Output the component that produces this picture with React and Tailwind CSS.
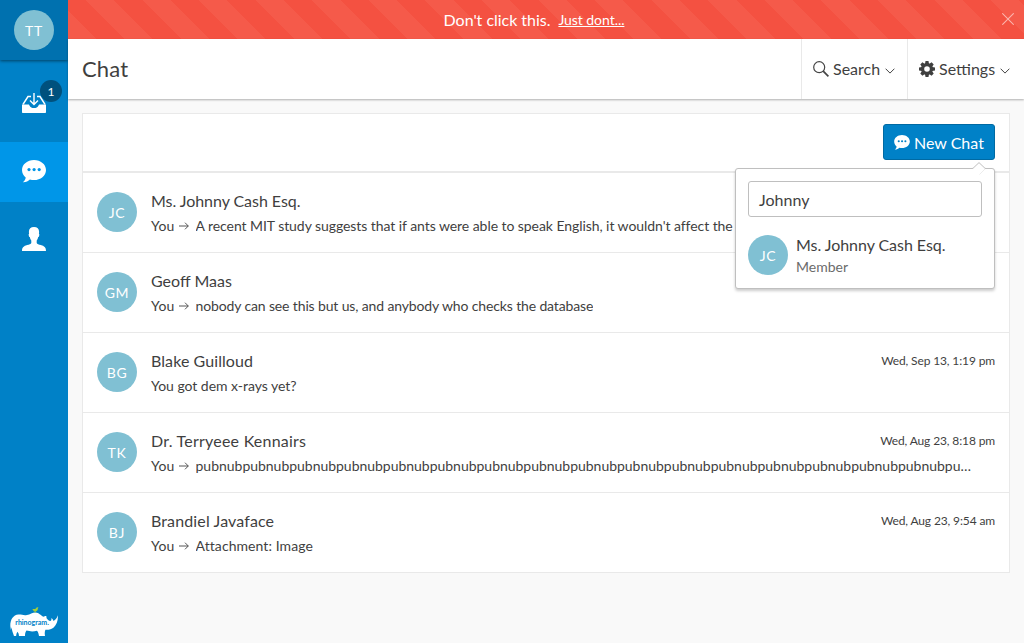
import React from 'react';

const chats = [
  { initials: 'JC', name: 'Ms. Johnny Cash Esq.', nameClass: 'tracking-[-0.05px]', you: true, text: "A recent MIT study suggests that if ants were able to speak English, it wouldn't affect the price of sugar at all", textClass: 'tracking-[-0.062px]', date: '' },
  { initials: 'GM', name: 'Geoff Maas', nameClass: '', you: true, text: 'nobody can see this but us, and anybody who checks the database', textClass: 'tracking-[-0.135px]', date: '' },
  { initials: 'BG', name: 'Blake Guilloud', nameClass: 'tracking-[0.08px]', you: false, text: 'You got dem x-rays yet?', textClass: 'tracking-[-0.03px]', date: 'Wed, Sep 13, 1:19 pm' },
  { initials: 'TK', name: 'Dr. Terryeee Kennairs', nameClass: 'tracking-[0.23px]', you: true, text: 'pubnub'.repeat(24), textClass: 'tracking-[-0.02px]', date: 'Wed, Aug 23, 8:18 pm' },
  { initials: 'BJ', name: 'Brandiel Javaface', nameClass: 'tracking-[0.13px]', you: true, text: 'Attachment: Image', textClass: 'tracking-[0.07px]', date: 'Wed, Aug 23, 9:54 am' },
];

function Avatar({ children }) {
  return (
    <div className="flex h-10 w-10 shrink-0 items-center justify-center rounded-full bg-[#80c0d3] pt-px text-[14px] leading-5 tracking-[0.7px] text-white">
      {children}
    </div>
  );
}

function Bubble({ className, dot }) {
  return (
    <svg viewBox="0 0 24 23" className={className}>
      <path fill="#fff" d="M12 0C5.400 0 0 4.400 0 10c0 3.200 1.500 5.800 3.700 7.600C3.600 19.500 2.600 21 .8 22.300c3.200.1 5.500-1.200 7.100-2.800 1.300.4 2.700.6 4.100.6 6.600 0 12-4.500 12-10.100S18.600 0 12 0z" />
      <g fill={dot}>
        <circle cx="7" cy="9.600" r="1.600" />
        <circle cx="12.100" cy="9.600" r="1.600" />
        <circle cx="17.200" cy="9.600" r="1.600" />
      </g>
    </svg>
  );
}

function Inbox() {
  return (
    <svg viewBox="0 0 24 20" className="h-5 w-6">
      <path d="M9 3.500H6L1 11.300M15 3.500h3L23 11.300" fill="none" stroke="#fff" strokeWidth="1.500" />
      <path d="M0 11.500h6.200c.8 0 1.100.5 1.400 1.200.7 1.500 2.300 2.300 4.400 2.300s3.700-.8 4.400-2.300c.3-.7.6-1.200 1.400-1.200H24V19c0 .6-.4 1-1 1H1c-.6 0-1-.4-1-1z" fill="#fff" />
      <path d="M12 0v11.500M8 7.600l4 4 4-4" fill="none" stroke="#fff" strokeWidth="1.400" />
    </svg>
  );
}

function Person() {
  return (
    <svg viewBox="0 0 24 24" className="h-6 w-6">
      <path fill="#fff" d="M12 0C8.700 0 6.900 1.600 6.900 4.700c0 .8.100 1.500.2 2.100-.5.200-.5.700-.3 1.600.2 1 .5 1.500 1 1.700.3 1.600.8 2.700 1.500 3.500v2.300c-.5 1-2 1.500-4.200 2.200C1.800 19.200 0 20.300 0 24h24c0-3.700-1.800-4.800-5.100-5.900-2.200-.7-3.700-1.200-4.200-2.200v-2.300c.7-.8 1.200-1.900 1.500-3.500.5-.2.800-.7 1-1.700.2-.9.200-1.400-.3-1.600.1-.6.200-1.300.2-2.100C17.100 1.600 15.300 0 12 0z" />
    </svg>
  );
}

function Rhino() {
  return (
    <svg viewBox="0 0 48 32" className="h-8 w-12">
      <path fill="#fff" d="M.3 21C.2 15 3 10 8.500 9.600c3-.2 5 1 8.500.4C20 9.500 22.500 7.500 25.500 7.500c3.500 0 5 3 8 4.200 1.200-.7 2-.9 2.600-.6.500.4.500 1.200.3 2 1.500 1.700 2.600 3 3.800 3 1 0 1.300-1 1.300-3 1.100.8 1.700 1.900 2 3C45.500 15 47 13.200 47.900 10.300c.3 4.500-1.200 9.500-4.200 12.200-2.300 2.100-5.200 2.500-8.300 2.300-.8 1.700-.8 4.100-.4 6.200h-6c-.3-2.100-.9-3.900-2-5.200-3.500.9-7 .8-10.500-.2-1.200 1.400-1.500 3.400-1.500 5.400H9c-.1-1.900-.6-3-1.600-4.200-.8 1.200-1.200 2.600-1.300 4.200H4c-1-3.200-2.200-5.500-2.400-8.800L.9 25z" />
      <path fill="#a6ce39" d="M22.500 4c2 .3 3.100-.1 3.700-1.100.5-.8 1.200-.9 1.700-.4l.8.300-.8.400c0 1.700-.9 2.900-2.300 3.300l-.1 1.200h-.7l-.1-1.200C23.600 6.200 22.900 5.300 22.500 4z" />
      <text x="5.300" y="20" fill="#0081c7" fontSize="8" fontWeight="700" textLength="33.500" lengthAdjust="spacingAndGlyphs">rhinogram.</text>
    </svg>
  );
}

function Chevron() {
  return (
    <svg viewBox="0 0 10 6" className="mt-1 ml-[5px] h-1.5 w-2.5">
      <path d="M.6.7 5 5.100 9.400.7" fill="none" stroke="#444" strokeWidth="1" />
    </svg>
  );
}

function Gear() {
  return (
    <svg viewBox="0 0 16 16" className="h-4 w-4">
      <g fill="#3f3f3f">
        <path d="M6.500 0h3l.5 3H6z M6.500 16h3l.5-3H6z M0 6.500v3l3 .5V6z M16 6.500v3l-3 .5V6z" />
        <path transform="rotate(45 8 8)" d="M6.500 0h3l.5 3H6z M6.500 16h3l.5-3H6z M0 6.500v3l3 .5V6z M16 6.500v3l-3 .5V6z" />
        <path fillRule="evenodd" d="M8 2a6 6 0 1 0 0 12A6 6 0 0 0 8 2zm0 3.200a2.800 2.800 0 1 1 0 5.600 2.800 2.800 0 0 1 0-5.600z" />
      </g>
    </svg>
  );
}

function ChatRow({ chat }) {
  return (
    <div className="flex h-20 border-b border-[#e9e9e9] pr-3.5 pl-3.5">
      <div className="pt-[19px]"><Avatar>{chat.initials}</Avatar></div>
      <div className="ml-3.5 min-w-0 flex-1 pt-4">
        <div className="flex justify-between">
          <div className={`text-[16px] leading-6 ${chat.nameClass}`}>{chat.name}</div>
          <div className="pt-px text-[12px] leading-[22px] tracking-[-0.13px]">{chat.date}</div>
        </div>
        <div className="mt-0.5 flex w-[822px] items-center text-[14px] leading-[22px]">
          {chat.you && (
            <>
              <span className="tracking-[0.2px]">You</span>
              <svg viewBox="0 0 10 8" className="mr-[7px] ml-1 h-2 w-2.5 shrink-0">
                <path d="M0 4h9.300M6 .7 9.300 4 6 7.300" fill="none" stroke="#444" strokeWidth=".9" />
              </svg>
            </>
          )}
          <span className={`truncate ${chat.textClass}`}>{chat.text}</span>
        </div>
      </div>
    </div>
  );
}

export default function App() {
  return (
    <div className="flex h-[643px] w-[1024px] overflow-hidden bg-[#f9f9f9] font-['Lato',sans-serif] text-[16px] text-[#3f3f3f]">
      <aside className="flex w-[68px] shrink-0 flex-col bg-[#0081c7]">
        <div className="flex h-[60px] items-center justify-center bg-[#0071af] shadow-[0_1px_3px_rgba(0,0,0,0.5)]">
          <Avatar>TT</Avatar>
        </div>
        <div className="relative flex h-[82px] justify-center pt-[33px]">
          <Inbox />
          <span className="absolute top-5 left-10 flex h-[22px] w-[22px] items-center justify-center rounded-full bg-[#00517d] pt-px text-[12px] text-white">1</span>
        </div>
        <div className="flex h-[60px] justify-center bg-[#0096e8] pt-[18px]">
          <Bubble className="h-[23px] w-6" dot="#0096e8" />
        </div>
        <div className="flex h-[60px] justify-center pt-[25px]"><Person /></div>
        <div className="mt-auto flex h-[38px] justify-center"><Rhino /></div>
      </aside>

      <main className="flex min-w-0 flex-1 flex-col">
        <div className="relative flex h-[39px] shrink-0 items-center justify-center bg-[repeating-linear-gradient(45deg,#f55a4a_0,#f55a4a_20px,#f45141_20px,#f45141_40px)] pr-6 text-white">
          <span className="tracking-[-0.03px]">Don't click this.</span>
          <a className="ml-2 text-[14px] tracking-[-0.05px] underline">Just dont...</a>
          <svg viewBox="0 0 12 12" className="absolute top-[13px] right-2.5 h-3 w-3">
            <path d="M.3.300 11.700 11.700M11.700.3.300 11.700" stroke="#fbb5ae" strokeWidth="1.100" />
          </svg>
        </div>
        <header className="z-10 flex h-[60px] shrink-0 items-center bg-white shadow-[0_1px_2px_rgba(0,0,0,0.3)]">
          <h1 className="ml-3.5 flex-1 text-[22px] leading-8 tracking-[0.15px]">Chat</h1>
          <div className="flex h-full w-[106px] items-center border-l border-[#e9e9e9] pl-[11px]">
            <svg viewBox="0 0 16 16" className="mr-1 h-4 w-4">
              <circle cx="6.200" cy="6.200" r="5.500" fill="none" stroke="#444" strokeWidth="1.200" />
              <path d="m10.200 10.200 5.200 5.200" stroke="#444" strokeWidth="1.700" />
            </svg>
            Search<Chevron />
          </div>
          <div className="flex h-full w-[117px] items-center border-l border-[#e9e9e9] pl-[11px]">
            <span className="mr-1"><Gear /></span>
            Settings<Chevron />
          </div>
        </header>

        <section className="mx-3.5 mt-3.5 border-x border-t border-[#e9e9e9] bg-white">
          <div className="flex h-[59px] justify-end border-b-2 border-[#e9e9e9] pt-2.5 pr-3.5">
            <div className="relative h-9">
              <button className="flex h-9 w-28 items-center rounded-[3px] border border-[#006aa3] bg-[#0081c7] pt-px pl-2.5 text-[16px] text-white">
                <Bubble className="mr-1 h-[15px] w-4" dot="#0081c7" />
                New Chat
              </button>
              <div className="absolute top-11 right-0 z-20 h-[121px] w-[260px] rounded-[3px] border border-[#bfbfbf] bg-white px-3 pt-3 shadow-[0_2px_3px_rgba(0,0,0,0.2)]">
                <svg viewBox="0 0 14 14" className="absolute -top-[7px] right-2 h-3.5 w-3.5">
                  <path d="M0 7 7 .6 14 7v1H0z" fill="#fff" />
                  <path d="M0 6.500 1 6.300 7 .6 13 6.300l1 .2" fill="none" stroke="#bfbfbf" />
                  <path d="M13 7 7.500 12.500" fill="none" stroke="#e4e4e4" strokeWidth=".7" />
                </svg>
                <div className="flex h-9 w-[234px] items-center rounded-[3px] border border-[#bfbfbf] pt-px pl-2.5">Johnny</div>
                <div className="mt-[18px] flex">
                  <Avatar>JC</Avatar>
                  <div className="-mt-0.5 ml-2">
                    <div className="leading-6 tracking-[-0.05px]">Ms. Johnny Cash Esq.</div>
                    <div className="text-[14px] leading-5 text-[#6b6b6b]">Member</div>
                  </div>
                </div>
              </div>
            </div>
          </div>
          {chats.map((chat) => <ChatRow key={chat.name} chat={chat} />)}
        </section>
      </main>
    </div>
  );
}
